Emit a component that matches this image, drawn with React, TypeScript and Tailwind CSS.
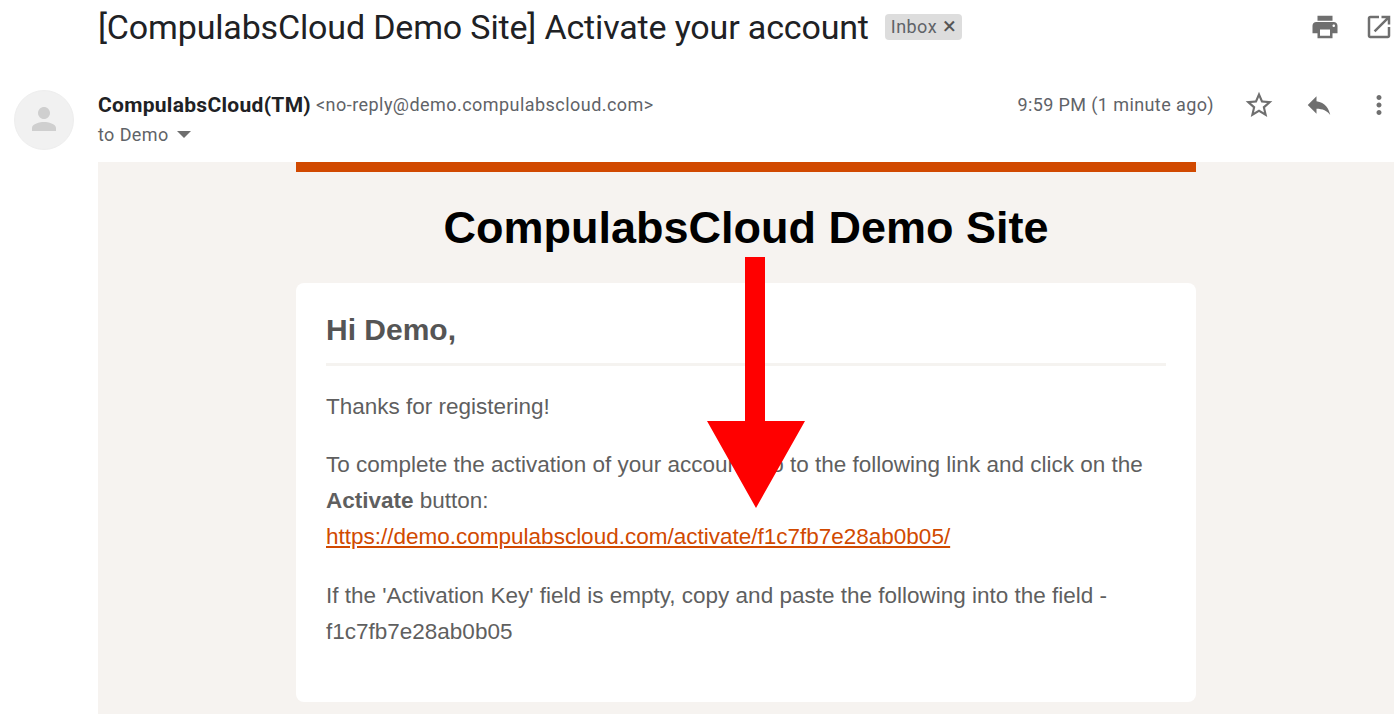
const printPath = "M19 8H5c-1.66 0-3 1.34-3 3v6h4v4h12v-4h4v-6c0-1.66-1.34-3-3-3zm-3 11H8v-5h8v5zm3-7c-.55 0-1-.45-1-1s.45-1 1-1 1 .45 1 1-.45 1-1 1zm-1-9H6v4h12V3z";
const openPath = "M19 19H5V5h7V3H5c-1.11 0-2 .9-2 2v14c0 1.1.89 2 2 2h14c1.1 0 2-.9 2-2v-7h-2v7zM14 3v2h3.59l-9.83 9.83 1.41 1.41L19 6.41V10h2V3h-7z";
const starPath = "M22 9.24l-7.19-.62L12 2 9.19 8.63 2 9.24l5.46 4.73L5.82 21 12 17.27 18.18 21l-1.63-7.03L22 9.24zM12 15.4l-3.76 2.27 1-4.28-3.32-2.88 4.38-.38L12 6.1l1.71 4.04 4.38.38-3.32 2.88 1 4.28L12 15.4z";
const replyPath = "M10 9V5l-7 7 7 7v-4.1c5 0 8.5 1.6 11 5.1-1-5-4-10-11-11z";
const morePath = "M12 8c1.1 0 2-.9 2-2s-.9-2-2-2-2 .9-2 2 .9 2 2 2zm0 2c-1.1 0-2 .9-2 2s.9 2 2 2 2-.9 2-2-.9-2-2-2zm0 6c-1.1 0-2 .9-2 2s.9 2 2 2 2-.9 2-2-.9-2-2-2z";

function Icon({ d, className = "w-[30px] h-[30px]" }: { d: string; className?: string }) {
  return (
    <svg viewBox="0 0 24 24" className={`${className} shrink-0 fill-[#6f6f6f]`}>
      <path d={d} />
    </svg>
  );
}

export default function App() {
  return (
    <div className="relative w-[1394px] h-[714px] overflow-hidden bg-white font-['Roboto',sans-serif]">
      {/* Subject */}
      <div className="flex items-center h-[54px] pl-[98px]">
        <h1 className="text-[34px] leading-[54px] text-[#202124] tracking-[-0.16px] whitespace-nowrap">
          [CompulabsCloud Demo Site] Activate your account
        </h1>
        <span className="ml-4 flex items-center h-[26px] px-[6px] pb-[2px] rounded bg-[#dddddd] text-[18px] tracking-[0.45px] text-[#5f6368]">
          Inbox
          <span className="ml-[6px] text-[24px] leading-none text-[#555]">×</span>
        </span>
        <div className="ml-auto flex items-center gap-6">
          <Icon d={printPath} />
          <Icon d={openPath} />
        </div>
      </div>

      {/* Sender */}
      <div className="flex h-[108px] pt-9 pl-[14px]">
        <div className="flex items-center justify-center w-[60px] h-[60px] pb-[2px] rounded-full bg-[#f1f1f1] border border-[#eeeeee]">
          <svg viewBox="0 0 24 24" className="w-9 h-9 fill-[#cfcfcf]">
            <path d="M12 12c2.2 0 4-1.8 4-4s-1.8-4-4-4-4 1.8-4 4 1.8 4 4 4zm0 2c-2.7 0-8 1.3-8 4v2h16v-2c0-2.7-5.3-4-8-4z" />
          </svg>
        </div>
        <div className="ml-6 flex-1">
          <div className="flex items-center h-[30px]">
            <span className="pt-[2px] text-[21px] font-bold text-[#202124] tracking-[0.3px]">CompulabsCloud(TM)</span>
            <span className="ml-[5px] pb-[2px] text-[18px] tracking-[0.45px] text-[#5f6368]">&lt;no-reply@demo.compulabscloud.com&gt;</span>
            <span className="ml-auto pb-[2px] text-[18px] tracking-[0.4px] text-[#5f6368]">9:59 PM (1 minute ago)</span>
            <div className="ml-[28px] flex items-center gap-[30px] pl-[2px]">
              <Icon d={starPath} className="w-[32px] h-[32px] -mx-px" />
              <Icon d={replyPath} />
              <Icon d={morePath} />
            </div>
          </div>
          <div className="flex items-center h-[30px] -mt-px text-[18px] tracking-[0.4px] text-[#5f6368]">
            to Demo
            <span className="ml-[8px] w-0 h-0 border-x-[7px] border-x-transparent border-t-[7px] border-t-[#6f6f6f]" />
          </div>
        </div>
      </div>

      {/* Mail body */}
      <div className="ml-[98px] h-[552px] bg-[#f6f3f0]">
        <div className="ml-[198px] w-[900px] font-['Liberation_Sans',sans-serif]">
          <div className="h-[10px] bg-[#d14900]" />
          <div className="h-[111px] flex items-center justify-center text-[45px] font-bold text-black">
            CompulabsCloud Demo Site
          </div>
          <div className="h-[419px] rounded-lg bg-white px-[30px] pt-[27px] text-[#5f5f5f]">
            <h2 className="text-[30px] leading-10 font-bold pb-[13px] border-b-[3px] border-[#f5f3f0] text-[#555]">Hi Demo,</h2>
            <p className="mt-[23px] text-[22.5px] leading-9">Thanks for registering!</p>
            <p className="mt-[22px] text-[22.5px] leading-9">
              To complete the activation of your account, go to the following link and click on the
              <br />
              <b>Activate</b> button:
              <br />
              <a className="text-[#d14900] underline">https://demo.compulabscloud.com/activate/f1c7fb7e28ab0b05/</a>
            </p>
            <p className="mt-[23px] text-[22.5px] leading-9">
              If the 'Activation Key' field is empty, copy and paste the following into the field -
              <br />
              f1c7fb7e28ab0b05
            </p>
          </div>
        </div>
      </div>

      {/* Red arrow annotation */}
      <svg className="absolute left-[707px] top-[257px] w-[98px] h-[251px]" viewBox="0 0 98 251">
        <polygon points="38,0 58,0 58,164 98,164 49,251 0,164 38,164" fill="#ff0000" />
      </svg>
    </div>
  );
}
